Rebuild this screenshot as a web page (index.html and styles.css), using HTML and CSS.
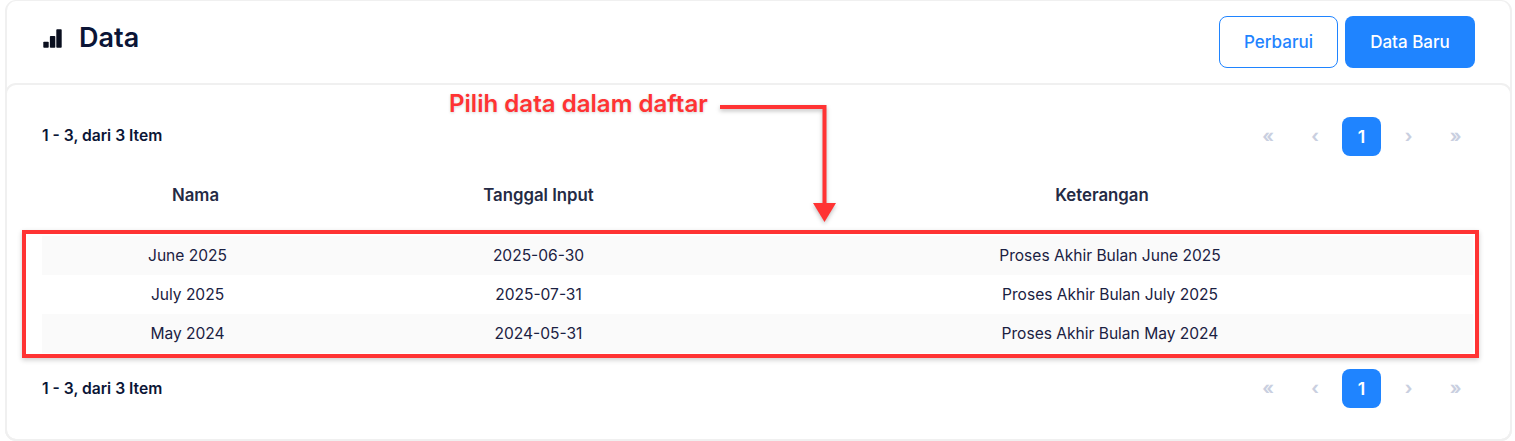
FILE: index.html
```html
<!DOCTYPE html>
<html lang="id">
<head>
<meta charset="utf-8">
<title>Data</title>
<link rel="stylesheet" href="styles.css">
</head>
<body>
<main class="shell">
  <header class="topbar">
    <h1 class="title">
      <svg class="title-icon" viewBox="0 0 20 22" width="20" height="22" aria-hidden="true">
        <rect x="1.300" y="15.700" width="5.400" height="6" rx="0.800"/>
        <rect x="7.900" y="10" width="5.400" height="11.700" rx="0.800"/>
        <rect x="14.300" y="3.300" width="5.400" height="18.400" rx="0.800"/>
      </svg>
      <span>Data</span>
    </h1>
    <div class="actions">
      <button class="btn btn-outline">Perbarui</button>
      <button class="btn btn-solid">Data Baru</button>
    </div>
  </header>
  <section class="panel">
    <div class="pager-row pager-top">
      <span class="count">1 - 3, dari 3 Item</span>
      <nav class="pager">
        <span class="pg pg-back">«</span><span class="pg pg-back">‹</span><span class="pg pg-on">1</span><span class="pg">›</span><span class="pg">»</span>
      </nav>
    </div>
    <table class="grid">
      <colgroup><col class="c1"><col class="c2"><col class="c3"></colgroup>
      <thead>
        <tr><th class="th-name">Nama</th><th>Tanggal Input</th><th class="th-note">Keterangan</th></tr>
      </thead>
      <tbody>
        <tr class="odd"><td>June 2025</td><td>2025-06-30</td><td class="td-note">Proses Akhir Bulan June 2025</td></tr>
        <tr><td>July 2025</td><td>2025-07-31</td><td class="td-note">Proses Akhir Bulan July 2025</td></tr>
        <tr class="odd"><td>May 2024</td><td>2024-05-31</td><td class="td-note">Proses Akhir Bulan May 2024</td></tr>
      </tbody>
    </table>
    <div class="pager-row pager-bottom">
      <span class="count">1 - 3, dari 3 Item</span>
      <nav class="pager">
        <span class="pg pg-back">«</span><span class="pg pg-back">‹</span><span class="pg pg-on">1</span><span class="pg">›</span><span class="pg">»</span>
      </nav>
    </div>
  </section>
</main>
<div class="note-label">Pilih data dalam daftar</div>
<svg class="note-arrow" width="130" height="130" viewBox="0 0 130 130" aria-hidden="true">
  <path d="M1 7 H105.500 V103" fill="none" stroke="#ff3333" stroke-width="4"/>
  <path d="M94 103 H117 L105.500 122 Z" fill="#ff3333"/>
</svg>
<div class="note-box"></div>
</body>
</html>
```
FILE: styles.css
```css
* { box-sizing: border-box; }
html, body { margin: 0; padding: 0; background: #ffffff; }
body {
  position: relative;
  width: 1515px;
  height: 441px;
  overflow: hidden;
  font-family: Inter, "Liberation Sans", sans-serif;
  color: #1a2142;
}
.shell {
  margin-left: 5px;
  width: 1507px;
  height: 441px;
  border: 2px solid #f0f0f0;
  border-top-width: 1px;
  border-radius: 11px;
  display: flex;
  flex-direction: column;
}
.topbar {
  height: 82px;
  flex: none;
  display: flex;
  justify-content: space-between;
  align-items: flex-start;
  padding: 15px 35px 0 35px;
}
.title {
  margin: 0;
  display: flex;
  align-items: center;
  gap: 17px;
  height: 42px;
  font-size: 27px;
  font-weight: 600;
  color: #0b1536;
}
.title-icon { fill: #0a0f1f; flex: none; }
.actions { display: flex; gap: 7px; }
.btn {
  height: 52px;
  border-radius: 8px;
  font-family: inherit;
  font-size: 17px;
  font-weight: 500;
}
.btn-outline {
  width: 119px;
  background: #fff;
  color: #1f84ff;
  border: 1px solid #1f84ff;
}
.btn-solid {
  width: 130px;
  background: #1f84ff;
  color: #fff;
  border: 0;
}
.panel {
  flex: 1;
  margin: 0 -2px -2px;
  border: 2px solid #f0f0f0;
  border-radius: 11px;
  padding: 0 35px;
}
.pager-row {
  display: flex;
  justify-content: space-between;
  align-items: center;
  height: 39px;
}
.pager-top { margin-top: 32px; }
.pager-top .count { margin-bottom: 2px; }
.pager-bottom { margin-top: 16px; }
.count { font-size: 15.650px; font-weight: 600; color: #0b1536; }
.pager { display: flex; gap: 8px; }
.pg {
  width: 39px;
  height: 39px;
  padding-bottom: 2px;
  border-radius: 8px;
  display: flex;
  align-items: center;
  justify-content: center;
  color: #c9cfe0;
  font-size: 17.800px;
  font-weight: 700;
}
.pg-back { padding-left: 1px; }
.pg-on { background: #1f84ff; color: #fff; font-weight: 600; padding-bottom: 0; }
.grid {
  width: 1431px;
  border-collapse: collapse;
  table-layout: fixed;
  font-size: 15.550px;
}
.c1 { width: 291px; }
.c2 { width: 411px; }
.c3 { width: 729px; }
th {
  height: 80px;
  padding: 0 0 2px;
  font-size: 16.800px;
  font-weight: 600;
  color: #242a44;
  text-align: center;
}
.th-name { padding-left: 16px; }
.th-note { padding-left: 1px; padding-right: 14px; }
td { height: 39px; padding: 0; text-align: center; }
.td-note { padding-left: 3px; }
.odd td { background: #fafafa; }
.note-label {
  position: absolute;
  left: 449px;
  top: 90px;
  font-size: 24.100px;
  font-weight: 600;
  line-height: 28px;
  color: #ff3333;
  text-shadow: 0 1px 3px rgba(0,0,0,.18);
}
.note-arrow {
  position: absolute;
  left: 719px;
  top: 100px;
  filter: drop-shadow(0 2px 2px rgba(0,0,0,.25));
}
.note-box {
  position: absolute;
  left: 22px;
  top: 230px;
  width: 1457px;
  height: 128px;
  border: 4px solid #ff3333;
  box-shadow: 0 2px 5px rgba(0,0,0,.2);
}
```
